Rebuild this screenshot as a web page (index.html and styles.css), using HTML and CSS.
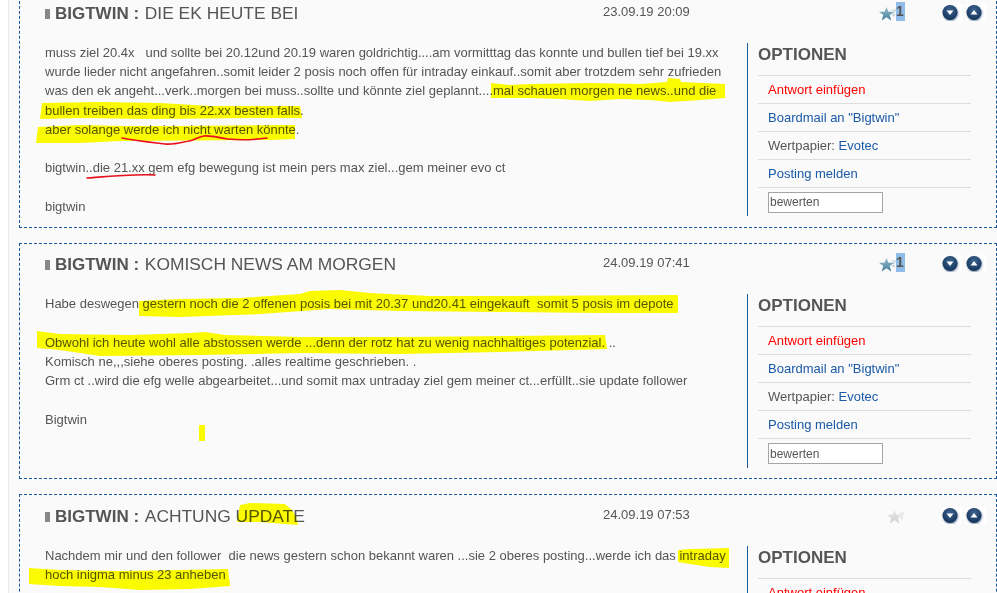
FILE: index.html
```html
<!DOCTYPE html>
<html lang="de">
<head>
<meta charset="utf-8">
<title>Postings</title>
<link rel="stylesheet" href="styles.css">
</head>
<body>
<svg width="0" height="0" class="defs">
  <defs>
    <linearGradient id="starBlue" x1="0" y1="0" x2="0" y2="1"><stop offset="0" stop-color="#9cbfce"/><stop offset="1" stop-color="#3f7f97"/></linearGradient>
    <linearGradient id="starGrey" x1="0" y1="0" x2="0" y2="1"><stop offset="0" stop-color="#e8e8e8"/><stop offset="1" stop-color="#cfcfcf"/></linearGradient>
    <radialGradient id="ball" cx="0.5" cy="0.35" r="0.7"><stop offset="0" stop-color="#3f6590"/><stop offset="1" stop-color="#0f2f55"/></radialGradient>
    <filter id="soft" x="-30%" y="-30%" width="160%" height="160%"><feGaussianBlur stdDeviation="0.8"/></filter>
    <symbol id="down" viewBox="0 0 20 17"><rect width="20" height="17" fill="#fff"/><circle cx="8.5" cy="9.5" r="7.5" fill="#6f86a0" filter="url(#soft)"/><circle cx="8" cy="8.5" r="7.5" fill="url(#ball)"/><path d="M4.5 6.5h7l-3.5 4.5z" fill="#fff"/></symbol>
    <symbol id="up" viewBox="0 0 20 17"><rect width="20" height="17" fill="#fff"/><circle cx="8.5" cy="9.5" r="7.5" fill="#6f86a0" filter="url(#soft)"/><circle cx="8" cy="8.5" r="7.5" fill="url(#ball)"/><path d="M4.5 10.5h7l-3.5-4.5z" fill="#fff"/></symbol>
    <symbol id="star" viewBox="0 0 18 14"><path d="M12.5 3h4.5l-2.3 2.4.6 3.4-2.8-1.4" fill="none" stroke="#c4d4dc" stroke-width="1.2"/><path d="M7.5 0l2 4.7h5.5l-4.3 3.2 1.6 5.6-4.8-3.2-4.8 3.2 1.6-5.6L0 4.7h5.5z" fill="url(#starBlue)"/></symbol>
    <symbol id="starOff" viewBox="0 0 18 14"><path d="M12.5 3h4.5l-2.3 2.4.6 3.4-2.8-1.4" fill="none" stroke="#e2e2e2" stroke-width="1.2"/><path d="M7.5 0l2 4.7h5.5l-4.3 3.2 1.6 5.6-4.8-3.2-4.8 3.2 1.6-5.6L0 4.7h5.5z" fill="url(#starGrey)"/></symbol>
  </defs>
</svg>

<main class="page">
  <article class="card">
    <header class="card-head">
      <h2 class="title"><b>Bigtwin :</b> <span class="subject">Die EK heute bei</span></h2>
      <time class="date">23.09.19 20:09</time>
      <div class="rating"><svg class="star"><use href="#star"/></svg><span class="count">1</span></div>
      <div class="nav"><svg class="arrow"><use href="#down"/></svg><svg class="arrow"><use href="#up"/></svg></div>
    </header>
    <div class="card-body">
      <p class="text">muss ziel 20.4x &nbsp; und sollte bei 20.12und 20.19 waren goldrichtig....am vormitttag das konnte und bullen tief bei 19.xx<br>wurde lieder nicht angefahren..somit leider 2 posis noch offen für intraday einkauf..somit aber trotzdem sehr zufrieden<br>was den ek angeht...verk..morgen bei muss..sollte und könnte ziel geplannt....mal schauen morgen ne news..und die<br>bullen treiben das ding bis 22.xx besten falls.<br>aber solange werde ich nicht warten könnte.<br><br>bigtwin..die 21.xx gem efg bewegung ist mein pers max ziel...gem meiner evo ct<br><br>bigtwin</p>
      <aside class="options">
        <h3 class="options-title">Optionen</h3>
        <ul class="options-list">
          <li><a class="reply">Antwort einfügen</a></li>
          <li><a>Boardmail an "Bigtwin"</a></li>
          <li>Wertpapier: <a>Evotec</a></li>
          <li><a>Posting melden</a></li>
          <li class="rate-row"><input class="rate" value="bewerten"></li>
        </ul>
      </aside>
    </div>
  </article>

  <article class="card">
    <header class="card-head">
      <h2 class="title"><b>Bigtwin :</b> <span class="subject">Komisch News am Morgen</span></h2>
      <time class="date">24.09.19 07:41</time>
      <div class="rating"><svg class="star"><use href="#star"/></svg><span class="count">1</span></div>
      <div class="nav"><svg class="arrow"><use href="#down"/></svg><svg class="arrow"><use href="#up"/></svg></div>
    </header>
    <div class="card-body">
      <p class="text">Habe deswegen gestern noch die 2 offenen posis bei mit 20.37 und20.41 eingekauft &nbsp;somit 5 posis im depote<br><br>Obwohl ich heute wohl alle abstossen werde ...denn der rotz hat zu wenig nachhaltiges potenzial. ..<br>Komisch ne,,,siehe oberes posting. .alles realtime geschrieben. .<br>Grm ct ..wird die efg welle abgearbeitet...und somit max untraday ziel gem meiner ct...erfüllt..sie update follower<br><br>Bigtwin</p>
      <aside class="options">
        <h3 class="options-title">Optionen</h3>
        <ul class="options-list">
          <li><a class="reply">Antwort einfügen</a></li>
          <li><a>Boardmail an "Bigtwin"</a></li>
          <li>Wertpapier: <a>Evotec</a></li>
          <li><a>Posting melden</a></li>
          <li class="rate-row"><input class="rate" value="bewerten"></li>
        </ul>
      </aside>
    </div>
  </article>

  <article class="card">
    <header class="card-head">
      <h2 class="title"><b>Bigtwin :</b> <span class="subject">Achtung Update</span></h2>
      <time class="date">24.09.19 07:53</time>
      <div class="rating"><svg class="star"><use href="#starOff"/></svg></div>
      <div class="nav"><svg class="arrow"><use href="#down"/></svg><svg class="arrow"><use href="#up"/></svg></div>
    </header>
    <div class="card-body">
      <p class="text">Nachdem mir und den follower &nbsp;die news gestern schon bekannt waren ...sie 2 oberes posting...werde ich das intraday<br>hoch inigma minus 23 anheben</p>
      <aside class="options">
        <h3 class="options-title">Optionen</h3>
        <ul class="options-list">
          <li><a class="reply">Antwort einfügen</a></li>
          <li><a>Boardmail an "Bigtwin"</a></li>
          <li>Wertpapier: <a>Evotec</a></li>
          <li><a>Posting melden</a></li>
          <li class="rate-row"><input class="rate" value="bewerten"></li>
        </ul>
      </aside>
    </div>
  </article>
</main>

<svg class="markup" viewBox="0 0 997 593" aria-hidden="true">
  <g class="marker">
    <path d="M491 83L510 85 530 84 590 83 640 84 667 82 668 78 680 79 681 82 725 84 725 98 700 100 670 102 650 100 620 99 590 101 560 99 530 98 491 98Z"/>
    <path d="M42 103L100 102 160 103 210 106 300 106 302 118 250 118 150 119 80 118 40 119Z"/>
    <path d="M38 127L80 125 122 126 180 126 295 125 295 139 270 140 120 141 80 143 36 143Z"/>
    <path d="M139 301L180 299 240 298 300 294 310 291 340 290 370 293 430 296 500 296 678 295 678 313 600 313 500 312 400 311 330 309 260 314 180 317 139 316Z"/>
    <path d="M37 331L60 334 130 335 190 333 205 332 225 335 300 337 400 337 605 335 607 349 500 352 400 354 300 353 200 355 100 356 60 350 37 348Z"/>
    <rect x="199" y="425" width="6" height="16"/>
    <path d="M240 505L250 503 285 504 292 510 296 517 298 525 285 524 260 522 237 522Z"/>
    <path d="M678 550L690 549 729 548 729 568 710 567 690 564 678 562Z"/>
    <path d="M29 568L60 570 120 571 180 570 228 569 230 586 190 589 140 590 100 587 60 586 29 584Z"/>
  </g>
  <g class="pen">
    <path d="M122 138c15 3 35 5 43 6s18-2 24-3 8-4 15-5 15 2 24 3 25 1 39-1"/>
    <path d="M87 178c25-2 45-4 68-3"/>
  </g>
</svg>
</body>
</html>
```

FILE: styles.css
```css
* { box-sizing: border-box; }
html, body { margin: 0; height: 593px; overflow: hidden; background: #fff; }
body { position: relative; font-family: "Liberation Sans", Arial, sans-serif; font-size: 13px; color: #555; }
.defs { position: absolute; }

.page {
  margin-left: 8px;
  height: 593px;
  padding-left: 10px;
  border-left: 1px solid #e8e8e8;
  background: #fafafa;
  overflow: hidden;
}
.card {
  height: 236.5px;
  margin-bottom: 15px;
  padding-left: 25px;
  border: 1px dashed #1b5a9a;
}
.card:first-child { margin-top: -8.7px; }

.card-head { display: flex; height: 50.6px; padding-top: 11.6px; align-items: flex-start; }
.title { flex: none; width: 558px; margin: 0; font-size: 17px; font-weight: normal; line-height: 18px; text-transform: uppercase; white-space: nowrap; }
.title::before { content: ""; display: inline-block; width: 5px; height: 10px; margin-right: 5px; background: #888; }
.title b { font-weight: bold; }
.subject { margin-left: 1px; font-size: 17.4px; }
.date { flex: none; width: 252px; margin-top: 1px; font-size: 13px; line-height: 14px; white-space: nowrap; }
.rating { flex: none; display: flex; justify-content: flex-end; width: 50px; height: 19px; margin: -2px 37px 0 0; }
.star { flex: none; width: 18px; height: 14px; margin-top: 5px; }
.count { flex: none; width: 9px; height: 19px; margin-left: -1px; background: #8fbce8; font-size: 14px; font-weight: bold; line-height: 19px; }
.nav { flex: none; display: flex; gap: 4px; }
.arrow { display: block; width: 20px; height: 17px; }

.card-body { display: flex; height: 173.4px; }
.text { flex: none; width: 702px; margin: 0; line-height: 19.2px; white-space: nowrap; }

.options { flex: none; width: 224px; padding-left: 10px; border-left: 1px solid #1b5a9a; }
.options-title { margin: 0; height: 32px; font-size: 17px; line-height: 23px; font-weight: bold; text-transform: uppercase; }
.options-list { margin: 0; padding: 0; list-style: none; }
.options-list li { height: 28px; padding-left: 10px; border-top: 1px solid #ddd; line-height: 27px; white-space: nowrap; }
.options-list .rate-row { height: 30px; line-height: normal; padding-top: 4px; }
.options-list a { color: #1a5aa6; }
.options-list a.reply { color: #f00; }
.rate { display: block; width: 115px; height: 21px; padding: 0 1px; border: 1px solid #a5a5a5; background: #fff; font: 12px "Liberation Sans", Arial, sans-serif; color: #555; }

.markup { position: absolute; left: 0; top: 0; width: 997px; height: 593px; pointer-events: none; }
.marker { fill: #ffff00; mix-blend-mode: multiply; }
.pen { fill: none; stroke: #e8101c; stroke-width: 1.6; stroke-linecap: round; }
```
